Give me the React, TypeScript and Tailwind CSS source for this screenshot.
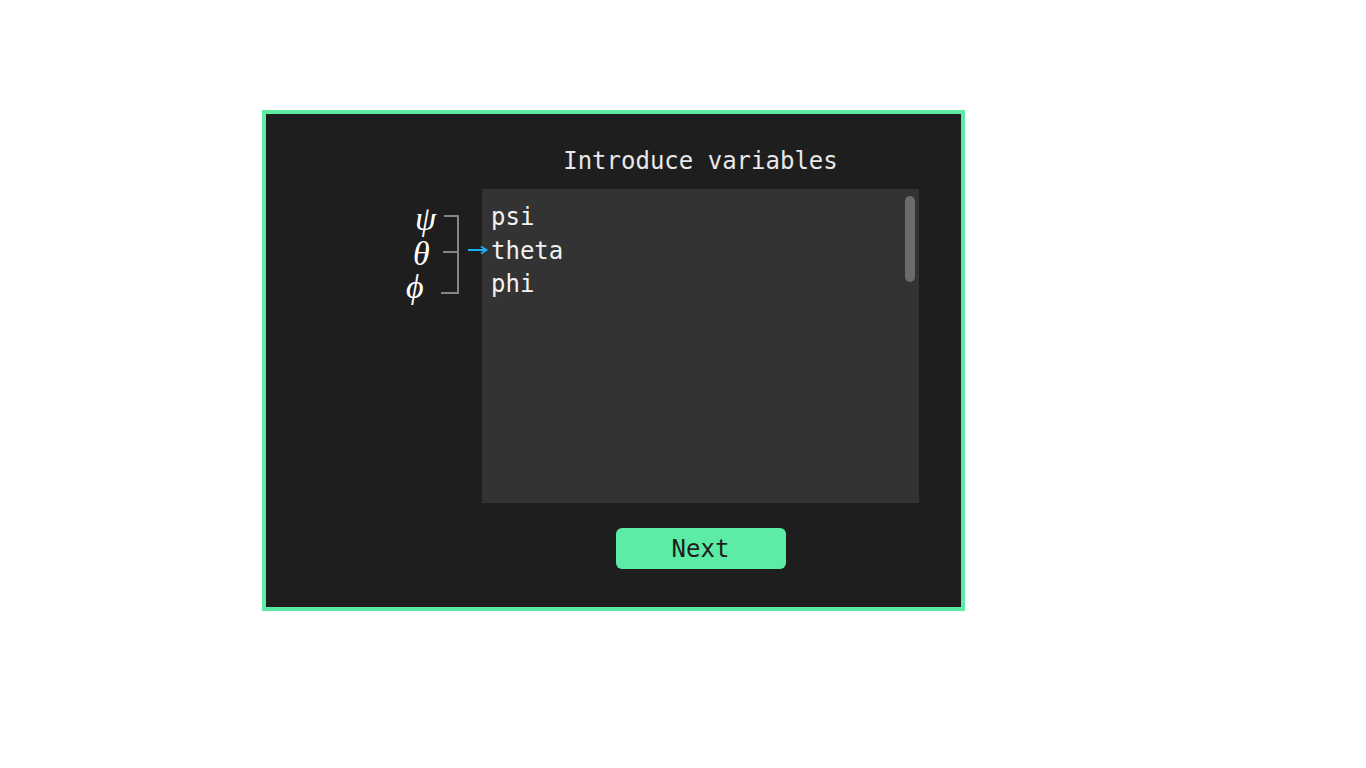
import React from 'react'

const mono = { fontFamily: '"DejaVu Sans Mono", "Liberation Mono", monospace' }
const serif = { fontFamily: '"Liberation Serif", "DejaVu Serif", serif' }

const variables = ['psi', 'theta', 'phi']

// greek symbols with a bracket that points at the list
function Annotation() {
  return (
    <div className="relative z-10 h-[120px] w-[130px] shrink-0">
      <span className="absolute left-[63px] top-[13px] text-[34px] italic leading-none text-white" style={serif}>ψ</span>
      <span className="absolute left-[61px] top-[48px] text-[34px] italic leading-none text-white" style={serif}>θ</span>
      <span className="absolute left-[54px] top-[81px] text-[34px] italic leading-none text-white" style={serif}>ϕ</span>
      <svg className="absolute left-0 top-0 overflow-visible" width="130" height="120" viewBox="0 0 130 120">
        <path d="M92 27H106V104H89M91 63H106" fill="none" stroke="#858585" strokeWidth="2" />
        <path d="M116 61H133" stroke="#19b0f2" strokeWidth="2" />
        <path d="M129 57.5L134.5 61L129 64.5" fill="none" stroke="#19b0f2" strokeWidth="1.8" />
      </svg>
    </div>
  )
}

export default function App() {
  return (
    <div className="min-h-screen bg-white pl-[262px] pt-[110px]">
      <div className="flex h-[501px] w-[703px] border-4 border-[#5ceca5] bg-[#1e1e1e]">
        <div className="flex w-[216px] shrink-0 justify-end pt-[75px]">
          <Annotation />
        </div>
        <div className="flex w-[437px] flex-col items-center pt-[33px]">
          <h1 className="text-[24px] leading-[28px] text-[#e8e8e8]" style={mono}>Introduce variables</h1>
          <div className="relative mt-[14px] h-[314px] w-full bg-[#333333] pl-[9px] pt-[12px]">
            {variables.map((v) => (
              <div key={v} className="text-[24px] leading-[33.6px] text-[#f2f2f2]" style={mono}>
                {v}
              </div>
            ))}
            <div className="absolute right-[4px] top-[7px] h-[86px] w-[10px] rounded-full bg-[#6b6b6b]" />
          </div>
          <button
            className="mt-[25px] h-[41px] w-[170px] rounded-[6px] bg-[#5ceca5] text-[24px] text-[#1e1e1e]"
            style={mono}
          >
            Next
          </button>
        </div>
      </div>
    </div>
  )
}
